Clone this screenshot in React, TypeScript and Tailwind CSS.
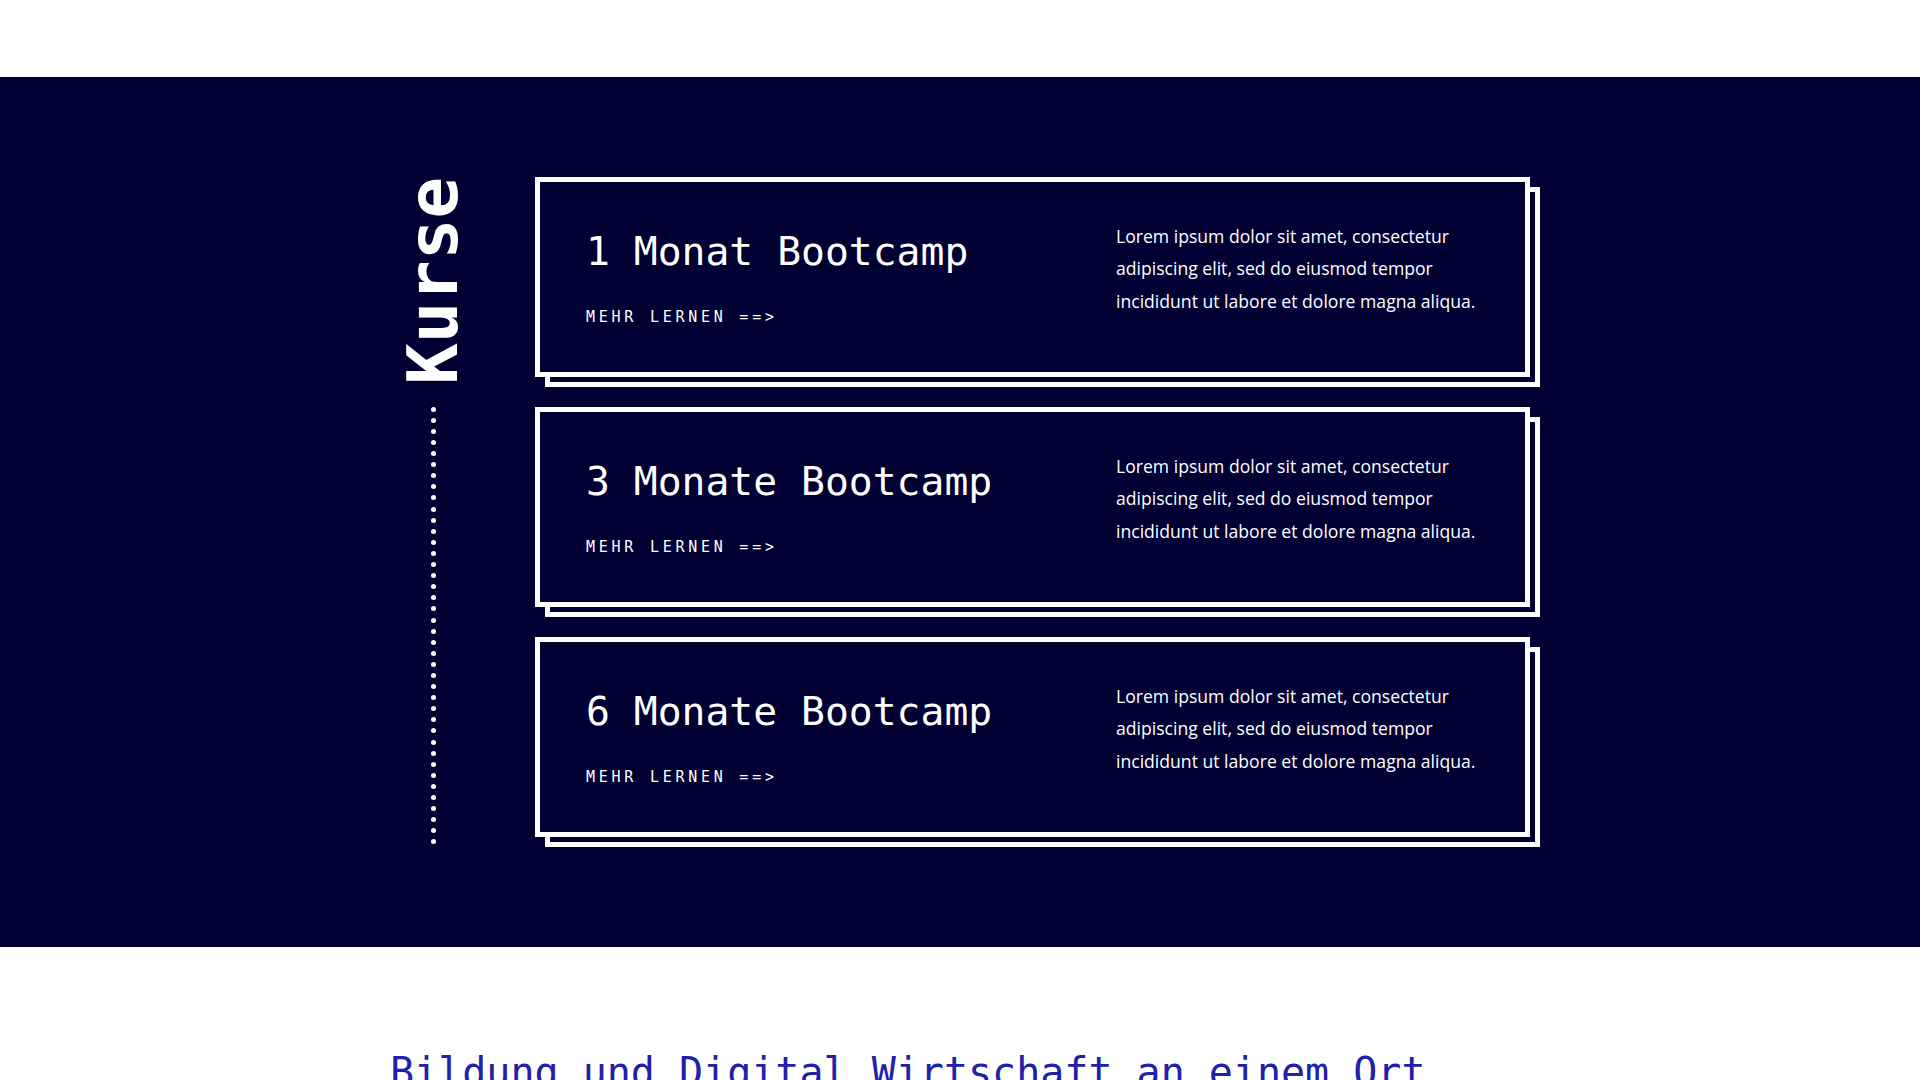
import React from 'react';

const courses = [
  { id: 1, title: '1 Monat Bootcamp' },
  { id: 2, title: '3 Monate Bootcamp' },
  { id: 3, title: '6 Monate Bootcamp' },
];

const dots = Array.from({ length: 40 }, (_, i) => i);

const CourseCard = ({ title }: { title: string }) => {
  return (
    <div className="relative h-[200px] w-[995px]">
      <div className="absolute left-[10px] top-[10px] h-full w-full border-[5px] border-white" />
      <div className="relative flex h-full w-full border-[5px] border-white bg-[#000033]">
        <div className="w-[576px] pl-[46px] pt-[49px] font-['DejaVu_Sans_Mono',monospace] text-white">
          <h2 className="text-[39.7px] leading-[40px]">{title}</h2>
          <a href="#" className="mt-[39px] block text-[15px] leading-[15px] tracking-[3.75px]">
            MEHR LERNEN ==&gt;
          </a>
        </div>
        <p className="pt-[38px] font-['Open_Sans',sans-serif] text-[17.6px] leading-[32.4px] whitespace-nowrap text-white">
          Lorem ipsum dolor sit amet, consectetur
          <br />
          adipiscing elit, sed do eiusmod tempor
          <br />
          incididunt ut labore et dolore magna aliqua.
        </p>
      </div>
    </div>
  );
};

const App = () => {
  return (
    <div className="min-h-screen bg-white">
      <header className="h-[77px] bg-white" />

      <section className="bg-[#000033] pb-[110px] pt-[100px]" id="kurse">
        <div className="mx-auto flex w-[1140px]">
          <div className="flex h-[660px] w-[145px] flex-col items-center pl-[11px] pr-[70px]">
            <h1 className="rotate-180 font-['DejaVu_Sans_Mono',monospace] text-[69px] font-bold leading-[69px] text-white [writing-mode:vertical-rl]">
              Kurse
            </h1>
            <div className="mt-[22px] flex flex-col items-center gap-[6.1px]">
              {dots.map((d) => (
                <span key={d} className="block h-[5px] w-[5px] rounded-full bg-white" />
              ))}
            </div>
          </div>

          <div className="flex flex-col gap-[30px]">
            {courses.map((c) => (
              <CourseCard key={c.id} title={c.title} />
            ))}
          </div>
        </div>
      </section>

      <section className="pt-[105px]">
        <div className="mx-auto w-[1140px]">
          <h2 className="font-['DejaVu_Sans_Mono',monospace] text-[40px] leading-[40px] text-[#2020a8]">
            Bildung und Digital Wirtschaft an einem Ort
          </h2>
        </div>
      </section>
    </div>
  );
};

export default App;
